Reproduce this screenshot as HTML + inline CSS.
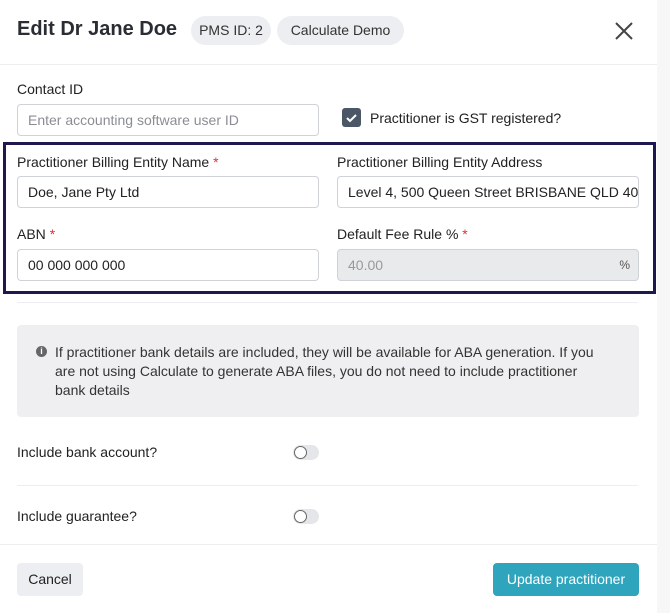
<!DOCTYPE html>
<html><head><style>
*{box-sizing:border-box;margin:0;padding:0}
body{width:670px;height:613px;background:#fff;font-family:"Liberation Sans",sans-serif;color:#222;position:relative;overflow:hidden}
.a{position:absolute}
.strip{left:657px;top:0;width:13px;height:613px;background:#f7f7f8}
.pill{background:#eceef1;border-radius:15px;font-size:14px;color:#333;line-height:29px;text-align:center;top:16px;height:29px}
.hr{height:1px;background:#eceef0}
.lbl{font-size:14px;color:#222}
.req{color:#d33}
.inp{border:1px solid #cfd2d6;border-radius:4px;height:32px;font-size:14px;line-height:30px;padding-left:10px;color:#222;background:#fff;white-space:nowrap;overflow:hidden}
.tog{width:26px;height:15px;border-radius:8px;background:#e4e6e9}
.tog::after{content:"";position:absolute;left:1px;top:1px;width:13px;height:13px;border-radius:50%;background:#fff;border:1px solid #666;box-sizing:border-box}
</style></head><body>
<div class="a strip"></div>
<div class="a" style="left:17px;top:18px;font-size:20px;font-weight:bold;color:#2a2d33">Edit Dr Jane Doe</div>
<div class="a pill" style="left:191px;width:80px">PMS ID: 2</div>
<div class="a pill" style="left:277px;width:127px">Calculate Demo</div>
<svg class="a" style="left:614px;top:21px" width="20" height="20"><path d="M2 2L18 18M18 2L2 18" stroke="#444" stroke-width="2"/></svg>
<div class="a hr" style="left:0;top:64px;width:657px"></div>
<div class="a lbl" style="left:17px;top:81px">Contact ID</div>
<div class="a inp" style="left:17px;top:104px;width:302px;color:#8a8e94">Enter accounting software user ID</div>
<div class="a" style="left:342px;top:108px;width:19px;height:19px;background:#4b5666;border-radius:3px"></div>
<svg class="a" style="left:342px;top:108px" width="19" height="19"><path d="M5 10l3 3 6-6" stroke="#fff" stroke-width="2" fill="none"/></svg>
<div class="a lbl" style="left:370px;top:110px">Practitioner is GST registered?</div>
<div class="a" style="left:3px;top:142px;width:653px;height:152px;border:3px solid #1d1850"></div>
<div class="a lbl" style="left:17px;top:154px">Practitioner Billing Entity Name <span class="req">*</span></div>
<div class="a lbl" style="left:337px;top:154px">Practitioner Billing Entity Address</div>
<div class="a inp" style="left:17px;top:176px;width:302px">Doe, Jane Pty Ltd</div>
<div class="a inp" style="left:337px;top:176px;width:302px">Level 4, 500 Queen Street BRISBANE QLD 4000</div>
<div class="a lbl" style="left:17px;top:226px">ABN <span class="req">*</span></div>
<div class="a lbl" style="left:337px;top:226px">Default Fee Rule % <span class="req">*</span></div>
<div class="a inp" style="left:17px;top:249px;width:302px">00 000 000 000</div>
<div class="a inp" style="left:337px;top:249px;width:302px;background:#e9eaec;color:#999">40.00<span style="position:absolute;right:8px;color:#555;font-size:12px">%</span></div>
<div class="a hr" style="left:17px;top:302px;width:621px"></div>
<div class="a" style="left:17px;top:325px;width:622px;height:92px;background:#efeff1;border-radius:4px"></div>
<div class="a" style="left:36px;top:346px;width:11px;height:11px;border-radius:50%;background:#666;color:#fff;font-size:9px;line-height:11px;text-align:center;font-weight:bold">i</div>
<div class="a" style="left:55px;top:343px;width:556px;font-size:14px;line-height:19px;color:#333">If practitioner bank details are included, they will be available for ABA generation. If you are not using Calculate to generate ABA files, you do not need to include practitioner bank details</div>
<div class="a lbl" style="left:17px;top:444px">Include bank account?</div>
<div class="a tog" style="left:293px;top:445px"></div>
<div class="a hr" style="left:17px;top:485px;width:621px"></div>
<div class="a lbl" style="left:17px;top:508px">Include guarantee?</div>
<div class="a tog" style="left:293px;top:509px"></div>
<div class="a hr" style="left:0;top:544px;width:657px"></div>
<div class="a" style="left:17px;top:563px;width:66px;height:33px;background:#eceef1;border-radius:4px;font-size:14px;line-height:33px;text-align:center;color:#222">Cancel</div>
<div class="a" style="left:493px;top:563px;width:146px;height:33px;background:#2ea5bd;border-radius:4px;font-size:14px;line-height:33px;text-align:center;color:#fff">Update practitioner</div>
</body></html>
